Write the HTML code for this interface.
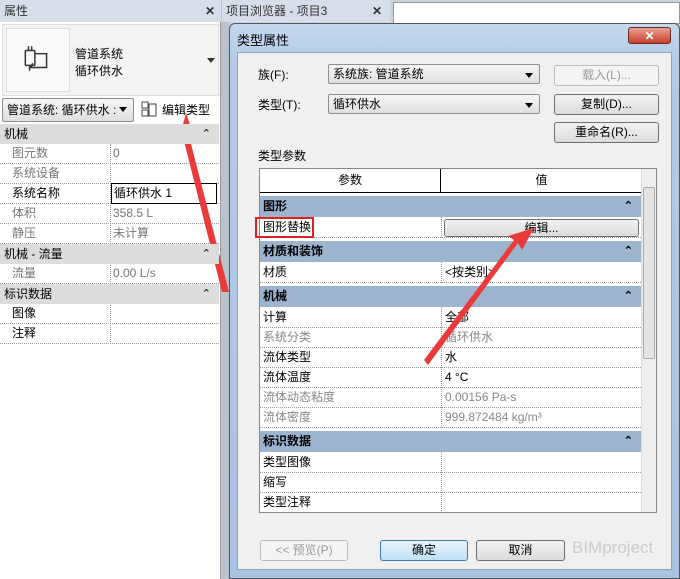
<!DOCTYPE html>
<html><head><meta charset="utf-8"><style>
*{box-sizing:border-box;margin:0;padding:0}
body{width:680px;height:579px;overflow:hidden;background:#c9d3de;font-family:"Liberation Sans","Noto Sans CJK SC",sans-serif;font-size:12px;color:#000;position:relative}
.a{position:absolute}
.row{position:absolute;left:0;height:20px;line-height:19px;border-bottom:1px dotted #999;width:100%}
.row span{position:absolute;top:0}
.btn{position:absolute;border:1px solid #707070;border-radius:3px;background:linear-gradient(#f2f2f2,#dcdcdc);text-align:center;line-height:18px}
.combo{position:absolute;border:1px solid #8e8f8f;border-radius:2px;background:linear-gradient(#f6f6f6,#e0e0e0);line-height:18px;padding-left:4px}
.combo:after{content:"";position:absolute;right:6px;top:8px;border:4px solid transparent;border-top:5px solid #000}
.sh{position:absolute;left:0;width:100%;height:21px;background:#9db4cf;font-weight:bold;line-height:21px;padding-left:3px}
.sh:after{content:"⌃";position:absolute;right:8px;top:0;font-size:11px}
.lh{position:absolute;left:0;width:100%;height:20px;background:#dcdcdc;line-height:20px;padding-left:4px;z-index:2}
.lh:after{content:"⌃";position:absolute;right:8px;top:0;font-size:11px}
</style></head><body>
<div class="a" style="left:219px;top:0;width:10px;height:579px;background:#b9c3cd"></div>
<!-- left panel -->
<div class="a" style="left:0;top:0;width:221px;height:579px;background:#fff;border-right:1px solid #999"></div>
<div class="a" style="left:0;top:0;width:221px;height:22px;background:#d6dfe9;line-height:22px;padding-left:4px;color:#333">属性<span class="a" style="right:6px;top:0;font-weight:bold">✕</span></div>
<div class="a" style="left:2px;top:24px;width:217px;height:72px;background:#f4f4f4;border:1px solid #ddd"></div>
<div class="a" style="left:6px;top:28px;width:64px;height:64px;background:#fafafa;border:1px solid #ddd"></div>
<svg class="a" style="left:20px;top:42px" width="34" height="34" viewBox="0 0 32 32" fill="none" stroke="#333" stroke-width="1.4"><rect x="5" y="8" width="9" height="14" rx="1"/><path d="M8 4v4M11 4v4M14 11h11v13h-15M9 22v5M12 20l-2 4 2 0"/></svg>
<div class="a" style="left:75px;top:46px;line-height:17px">管道系统<br>循环供水</div>
<div class="a" style="left:207px;top:58px;border:4px solid transparent;border-top:5px solid #333"></div>
<div class="combo" style="left:2px;top:98px;width:132px;height:24px;line-height:22px">管道系统: 循环供水 :</div>
<svg class="a" style="left:141px;top:101px" width="16" height="16" fill="none" stroke="#444"><rect x="1" y="1" width="6" height="6"/><rect x="1" y="9" width="6" height="6"/><rect x="8" y="3" width="7" height="12"/></svg>
<div class="a" style="left:162px;top:101px">编辑类型</div>
<div class="a" style="left:0;top:124px;width:219px;height:220px">
<div class="lh" style="top:0">机械</div>
<div class="row" style="top:20px"><span style="left:12px;color:#777">图元数</span><span style="left:113px;color:#777">0</span></div>
<div class="row" style="top:40px"><span style="left:12px;color:#777">系统设备</span></div>
<div class="row" style="top:60px"><span style="left:12px">系统名称</span><span style="left:111px;top:-1px;width:106px;height:21px;border:1px solid #000;padding-left:2px">循环供水 1</span></div>
<div class="row" style="top:80px"><span style="left:12px;color:#777">体积</span><span style="left:113px;color:#777">358.5 L</span></div>
<div class="row" style="top:100px"><span style="left:12px;color:#777">静压</span><span style="left:113px;color:#777">未计算</span></div>
<div class="lh" style="top:120px">机械 - 流量</div>
<div class="row" style="top:140px"><span style="left:12px;color:#777">流量</span><span style="left:113px;color:#777">0.00 L/s</span></div>
<div class="lh" style="top:160px">标识数据</div>
<div class="row" style="top:180px"><span style="left:12px">图像</span></div>
<div class="row" style="top:200px"><span style="left:12px">注释</span></div>
<div class="a" style="left:110px;top:20px;height:200px;border-left:1px dotted #999"></div>
</div>
<!-- middle tab -->
<div class="a" style="left:222px;top:0;width:168px;height:22px;background:#d6dfe9;line-height:22px;padding-left:4px;color:#333">项目浏览器 - 项目3<span class="a" style="right:8px;top:0;font-weight:bold">✕</span></div>
<div class="a" style="left:393px;top:2px;width:287px;height:22px;background:#fff;border:1px solid #999"></div>
<!-- dialog -->
<div class="a" style="left:229px;top:23px;width:451px;height:556px;border:1px solid #555;border-radius:6px 6px 0 0;background:linear-gradient(#c5d8ee,#b3cbe6 40px,#a9c3e2)"></div>
<div class="a" style="left:237px;top:30px;font-size:13px">类型属性</div>
<div class="a" style="left:628px;top:27px;width:43px;height:17px;border:1px solid #6b2b22;border-radius:3px;background:linear-gradient(#e8a090,#c8402c);color:#fff;text-align:center;font-weight:bold;line-height:16px">✕</div>
<div class="a" style="left:237px;top:52px;width:435px;height:518px;background:#f0f0f0;border:1px solid #8aa"></div>
<div class="a" style="left:258px;top:66px">族(F):</div>
<div class="combo" style="left:328px;top:64px;width:212px;height:20px">系统族: 管道系统</div>
<div class="btn" style="left:554px;top:65px;width:105px;height:21px;color:#999;border-color:#bbb;background:#f4f4f4">载入(L)...</div>
<div class="a" style="left:258px;top:96px">类型(T):</div>
<div class="combo" style="left:328px;top:94px;width:212px;height:20px">循环供水</div>
<div class="btn" style="left:554px;top:94px;width:105px;height:21px">复制(D)...</div>
<div class="btn" style="left:554px;top:122px;width:105px;height:21px">重命名(R)...</div>
<div class="a" style="left:258px;top:147px">类型参数</div>
<div class="a" style="left:259px;top:168px;width:398px;height:345px;background:#fff;border:1px solid #888;overflow:hidden">
<div class="a" style="left:0;top:0;width:381px;height:24px;border-bottom:1px solid #000;background:#fff;line-height:23px"><span class="a" style="left:0;width:181px;text-align:center;border-right:1px solid #000;height:23px">参数</span><span class="a" style="left:182px;width:199px;text-align:center">值</span></div>
<div class="a" style="left:381px;top:0;width:16px;height:345px;background:#eee;border-left:1px solid #ddd"></div>
<div class="a" style="left:383px;top:18px;width:12px;height:172px;background:#e4e4e4;border:1px solid #aaa;border-radius:2px"></div>
<div class="a" style="left:0;top:24px;width:381px;height:320px">
<div class="sh" style="top:3px">图形</div>
<div class="row" style="top:25px"><span style="left:3px">图形替换</span><span class="btn" style="left:184px;top:1px;width:195px;height:18px;line-height:16px">编辑...</span></div>
<div class="sh" style="top:48px">材质和装饰</div>
<div class="row" style="top:70px"><span style="left:3px">材质</span><span style="left:185px">&lt;按类别&gt;</span></div>
<div class="sh" style="top:93px">机械</div>
<div class="row" style="top:115px"><span style="left:3px">计算</span><span style="left:185px">全部</span></div>
<div class="row" style="top:135px"><span style="left:3px;color:#888">系统分类</span><span style="left:185px;color:#888">循环供水</span></div>
<div class="row" style="top:155px"><span style="left:3px">流体类型</span><span style="left:185px">水</span></div>
<div class="row" style="top:175px"><span style="left:3px">流体温度</span><span style="left:185px">4 °C</span></div>
<div class="row" style="top:195px"><span style="left:3px;color:#888">流体动态粘度</span><span style="left:185px;color:#888">0.00156 Pa-s</span></div>
<div class="row" style="top:215px"><span style="left:3px;color:#888">流体密度</span><span style="left:185px;color:#888">999.872484 kg/m³</span></div>
<div class="sh" style="top:238px">标识数据</div>
<div class="row" style="top:260px"><span style="left:3px">类型图像</span></div>
<div class="row" style="top:280px"><span style="left:3px">缩写</span></div>
<div class="row" style="top:300px"><span style="left:3px">类型注释</span></div>
<div class="a" style="left:181px;top:24px;height:21px;border-left:1px dotted #999"></div>
<div class="a" style="left:181px;top:69px;height:21px;border-left:1px dotted #999"></div>
<div class="a" style="left:181px;top:114px;height:121px;border-left:1px dotted #999"></div>
<div class="a" style="left:181px;top:259px;height:61px;border-left:1px dotted #999"></div>
</div>
</div>
<div class="a" style="left:255px;top:217px;width:59px;height:21px;border:2px solid #e02020"></div>
<div class="btn" style="left:260px;top:540px;width:88px;height:21px;color:#999;border-color:#bbb;background:#f4f4f4">&lt;&lt; 预览(P)</div>
<div class="btn" style="left:380px;top:540px;width:88px;height:21px;border-color:#3c7fb1;background:linear-gradient(#e8f4fc,#bfe0f6)">确定</div>
<div class="btn" style="left:476px;top:540px;width:89px;height:21px">取消</div>
<div class="a" style="left:572px;top:538px;font-size:17px;color:#ccc">BIMproject</div>
<svg class="a" style="left:0;top:0" width="680" height="579"><g fill="#ea3a3a"><polygon points="186,113 196,142 190,140 229,292 222,292 184,141 178,143"/><polygon points="534,228 522,250 518,243 428,365 424,360 514,240 508,236"/></g></svg>
</body></html>
